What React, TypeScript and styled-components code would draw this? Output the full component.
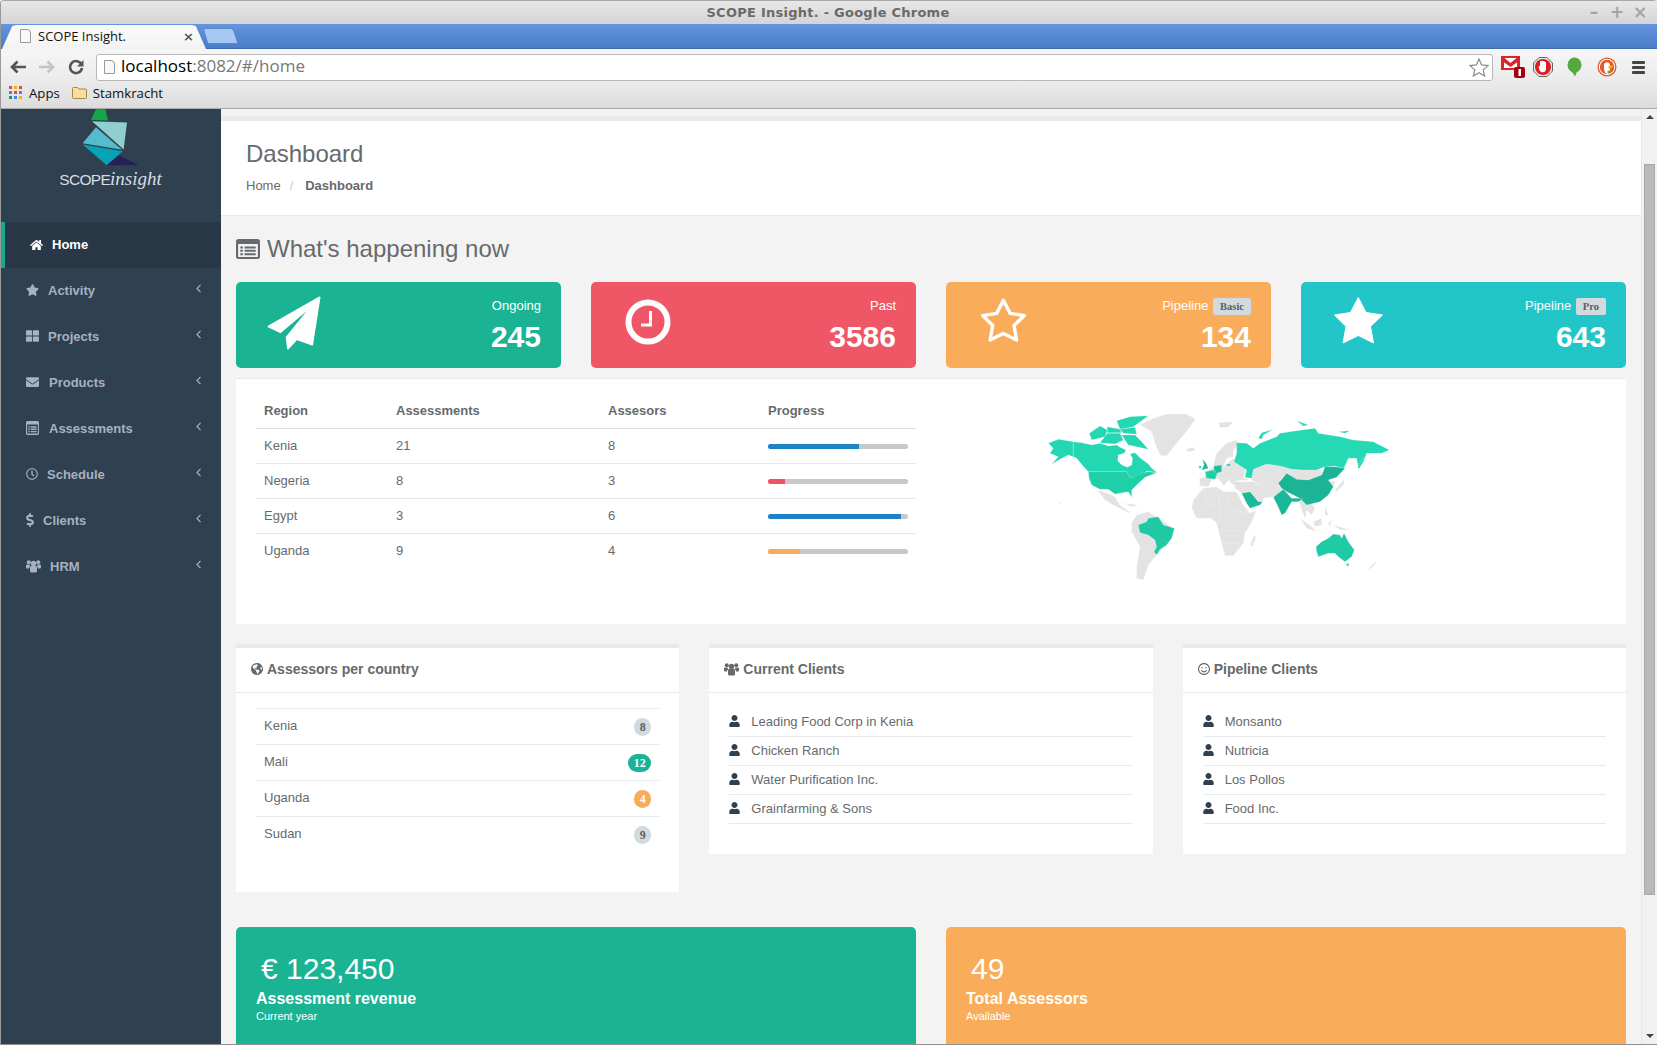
import React from "react";
import styled, { createGlobalStyle } from "styled-components";
import {
  FaDollarSign,
  FaEnvelope,
  FaGlobeAmericas,
  FaHome,
  FaRegClock,
  FaRegSmile,
  FaStar,
  FaThLarge,
  FaUser,
} from "react-icons/fa";

const GlobalStyle = createGlobalStyle`
  html, body { margin: 0; padding: 0; height: 100%; overflow: hidden; }
  body { font-family: "Liberation Sans", Arial, sans-serif; font-size: 13px; color: #676a6c; background: #f3f3f4; }
  * { box-sizing: border-box; }
`;

const UI_FONT = `"Open Sans", "Noto Sans", sans-serif`;

const regions = [
  { name: "Kenia", assessments: 21, assessors: 8, progress: 65, color: "#1c84c6" },
  { name: "Negeria", assessments: 8, assessors: 3, progress: 12, color: "#ed5565" },
  { name: "Egypt", assessments: 3, assessors: 6, progress: 95, color: "#1c84c6" },
  { name: "Uganda", assessments: 9, assessors: 4, progress: 23, color: "#f8ac59" },
];

const countries = [
  { name: "Kenia", count: 8, bg: "#d1dade", fg: "#5e5e5e" },
  { name: "Mali", count: 12, bg: "#1ab394", fg: "#fff" },
  { name: "Uganda", count: 4, bg: "#f8ac59", fg: "#fff" },
  { name: "Sudan", count: 9, bg: "#d1dade", fg: "#5e5e5e" },
];

function ListAltIcon({ width, height }: { width: number; height: number }) {
  return (
    <svg width={width} height={height} viewBox="0 0 28 24" fill="currentColor" preserveAspectRatio="none">
      <path fillRule="evenodd" d="M3 0h22a3 3 0 0 1 3 3v18a3 3 0 0 1-3 3H3a3 3 0 0 1-3-3V3a3 3 0 0 1 3-3zM2.5 6v15a.5.5 0 0 0 .5.5h22a.5.5 0 0 0 .5-.5V6z" />
      <path d="M5 9h3v2.4H5zM10 9h13v2.4H10zM5 13h3v2.4H5zM10 13h13v2.4H10zM5 17h3v2.4H5zM10 17h13v2.4H10z" />
    </svg>
  );
}

function UsersIcon() {
  return (
    <svg viewBox="0 0 30 26" fill="currentColor">
      <circle cx="15" cy="8" r="5.5" />
      <circle cx="5.5" cy="5.5" r="4" />
      <circle cx="24.5" cy="5.5" r="4" />
      <path d="M8 15.5a3 3 0 0 1 3-2.5h8a3 3 0 0 1 3 2.5V23a3 3 0 0 1-3 3h-8a3 3 0 0 1-3-3z" />
      <path d="M0 11.5a2 2 0 0 1 2-1.500h5c.5 1.5 1 2.5 2 3.500-2 .8-3 2.500-3 4.500H2a2 2 0 0 1-2-2z" />
      <path d="M30 11.5a2 2 0 0 0-2-1.500h-5c-.5 1.5-1 2.5-2 3.500 2 .8 3 2.500 3 4.500h4a2 2 0 0 0 2-2z" />
    </svg>
  );
}

const navItems = [
  { label: "Activity", icon: <FaStar />, width: 13, gap: 9 },
  { label: "Projects", icon: <FaThLarge />, width: 13, gap: 9 },
  { label: "Products", icon: <FaEnvelope />, width: 13, gap: 10 },
  { label: "Assessments", icon: <ListAltIcon width={13} height={10} />, width: 13, gap: 10 },
  { label: "Schedule", icon: <FaRegClock />, width: 12, gap: 9 },
  { label: "Clients", icon: <FaDollarSign />, width: 8, gap: 9 },
  { label: "HRM", icon: <UsersIcon />, width: 15, gap: 9 },
];

function Logo() {
  return (
    <svg width="60" height="57" viewBox="245 326 180 170">
      <polygon points="275,358 290,326 318,326 326,360" fill="#12a84a" />
      <polygon points="278,362 383,366 373,447" fill="#8fd0cf" />
      <polygon points="250,428 290,380 368,448" fill="#55bccd" />
      <polygon points="250,432 370,452 322,494" fill="#05a3b3" />
      <polygon points="322,494 360,465 418,494" fill="#262054" />
    </svg>
  );
}

function PlaneIcon() {
  return (
    <svg width="54" height="54" viewBox="110 78 160 160" fill="#fff" stroke="#fff" strokeWidth="5" strokeLinejoin="round">
      <polygon points="266,82 244,222 198,206 172,234 168,200 244,106 150,185 114,168" />
    </svg>
  );
}

function ClockIcon() {
  return (
    <svg width="46" height="46" viewBox="0 0 46 46" fill="none" stroke="#fff">
      <circle cx="23" cy="23" r="19.5" strokeWidth="6" />
      <path d="M25.5 12v14H16" strokeWidth="3" />
    </svg>
  );
}

function StarIcon({ solid }: { solid?: boolean }) {
  const points = solid
    ? "24.3,0.5 32,15.5 48.5,18 36.5,29.5 39.5,46 24.3,38.5 9,46 12,29.5 0.5,18 16.5,15.5"
    : "24.4,3.4 31.1,16.4 45.4,18.6 35,28.5 37.6,43 24.4,36.4 11.1,43 13.7,28.5 3.8,18.6 17.7,16.4";
  return (
    <svg width="49" height="47" viewBox="0 0 49 47" fill={solid ? "#fff" : "none"} stroke="#fff" strokeWidth={solid ? 1 : 3.4} strokeLinejoin="round">
      <polygon points={points} />
    </svg>
  );
}

function WorldMap() {
  const gray = "#e3e3e3";
  const land = (points: string, fill: string) => <polygon points={points} fill={fill} />;
  const border = (points: string) => <polyline points={points} fill="none" stroke="#fff" strokeOpacity="0.75" />;
  return (
    <svg width="400" height="210" viewBox="0 0 1200 630" stroke="#fff" strokeWidth="1" strokeOpacity="0.55">
      {/* grey countries */}
      {land("360,105 400,85 440,72 500,72 527,88 495,130 465,165 440,198 420,195 405,160 395,125", gray)}
      {land("498,178 520,172 525,182 505,185", gray)}
      {land("595,98 640,95 625,112 600,112", gray)}
      {land("580,225 590,190 620,160 650,150 655,165 640,180 640,200 620,205 610,230 590,235", gray)}
      {land("610,230 640,205 650,215 678,240 670,262 690,270 650,272 640,285 625,270 612,288 595,265 575,270 565,290 540,288 538,265 555,260 560,245 582,228", gray)}
      {land("640,275 700,275 720,285 770,285 785,295 790,305 760,320 730,325 728,335 715,335 690,305 665,310 645,295", gray)}
      {land("690,240 740,222 780,228 815,238 800,250 780,270 785,295 770,288 720,285 695,270", gray)}
      {land("815,238 850,238 905,238 905,255 865,270 830,268 800,250", gray)}
      {land("515,355 520,330 550,295 590,290 610,305 650,305 670,345 690,370 710,360 695,395 675,430 670,460 640,497 615,497 600,440 590,400 575,385 530,385", gray)}
      {border("550,295 560,340 530,385")}
      {border("590,290 600,350 595,400")}
      {border("610,305 640,360 690,370")}
      {border("600,350 560,340")}
      {border("600,420 680,425")}
      {border("612,460 670,460")}
      {border("570,270 640,262")}
      {border("600,235 625,270")}
      {border("720,285 740,320")}
      {border("720,240 760,285")}
      {land("690,465 705,432 707,445 697,470", gray)}
      {land("835,325 870,335 885,355 875,375 860,360 855,385 845,360", gray)}
      {land("840,385 875,410 890,425 860,415", gray)}
      {land("880,395 905,385 905,405 885,410", gray)}
      {land("915,350 925,375 915,375", gray)}
      {land("925,400 935,390 930,410", gray)}
      {land("940,405 990,420 960,420", gray)}
      {land("945,300 975,265 970,285 950,305", gray)}
      {land("930,275 945,272 940,292", gray)}
      {land("232,300 270,312 285,322 300,345 335,370 320,365 280,345 255,330", gray)}
      {land("310,340 355,345 335,350", gray)}
      {land("335,400 350,375 385,365 415,385 465,418 440,465 410,495 385,525 370,570 350,565 350,530 360,470 335,425", gray)}
      {land("1040,540 1072,510 1060,530", gray)}
      {/* canada and alaska */}
      {land("85,160 115,148 160,155 160,200 145,195 125,205 95,222 115,200 90,190 100,175", "#22d7b2")}
      {land("160,155 185,158 215,165 240,160 265,168 290,165 300,172 318,180 312,190 295,195 293,212 305,225 322,232 335,225 338,205 330,192 345,188 362,205 385,222 395,235 412,248 395,245 380,243 365,258 340,262 330,268 320,245 205,245 195,235 170,205 160,200", "#22d7b2")}
      {land("290,92 330,80 385,77 365,92 340,110 300,118", "#22d7b2")}
      {land("208,130 240,108 262,120 255,140 215,150", "#22d7b2")}
      {land("262,110 300,118 305,128 262,128", "#22d7b2")}
      {land("262,130 300,130 310,150 285,162 240,158", "#22d7b2")}
      {land("300,118 345,112 350,133 310,130", "#22d7b2")}
      {land("305,135 345,135 365,155 385,178 350,170 325,165", "#22d7b2")}
      {land("118,339 120,339 120,341 118,341", "#22d7b2")}
      {/* usa */}
      {land("205,245 320,245 330,265 360,250 385,245 410,248 375,262 350,285 335,300 335,322 325,305 285,312 265,298 240,298 215,285 207,265", "#1fcfa8")}
      {/* russia */}
      {land("650,158 680,160 700,175 720,160 770,140 780,130 830,122 885,115 895,130 960,140 1000,150 1060,155 1108,180 1085,190 1040,190 1030,215 1015,235 1010,205 985,205 975,228 970,235 945,228 910,232 890,240 850,240 815,238 780,228 740,222 700,238 695,265 675,262 680,240 642,215 650,190", "#24d9b4")}
      {land("715,145 725,128 760,118 730,135 725,148", "#24d9b4")}
      {land("830,92 865,105 850,108", "#24d9b4")}
      {land("955,125 990,122 975,130", "#24d9b4")}
      {land("1012,235 1030,200 1030,215 1018,235", "#24d9b4")}
      {/* western europe */}
      {land("548,208 558,220 565,235 545,240 552,225", "#1bb697")}
      {land("535,228 545,228 540,238", "#22d7b2")}
      {land("555,245 580,240 592,250 585,268 560,265", "#1fcfa8")}
      {land("582,228 605,225 605,245 590,250 582,240", "#1cc09f")}
      {land("620,222 632,222 630,228 620,228", "#22d7b2")}
      {/* asia */}
      {land("775,280 800,250 830,268 865,270 905,255 915,230 945,230 975,235 950,262 925,270 940,290 925,315 900,335 860,345 840,325 800,305 785,295", "#1cb496")}
      {land("760,322 790,298 815,325 850,325 835,335 815,335 795,370 785,375 772,345", "#1ab898")}
      {land("665,310 690,305 715,335 728,335 720,345 690,355 680,340", "#1cb99a")}
      {/* brazil and australia */}
      {land("355,405 380,395 385,385 415,380 430,405 463,415 455,445 440,465 420,478 410,495 402,485 410,470 405,450 385,435 360,428", "#1fc9a3")}
      {land("888,470 905,455 925,445 940,432 960,435 965,445 972,430 985,455 1003,480 995,500 975,515 955,500 945,490 925,490 895,500 890,485", "#1fcaa5")}
      {land("978,522 988,520 984,530", "#1fcaa5")}
    </svg>
  );
}

export default function App() {
  return (
    <>
      <GlobalStyle />
      <Window>
        <TitleBar>
          <WindowTitle>SCOPE Insight. - Google Chrome</WindowTitle>
          <WindowControls>
            <WindowControl>–</WindowControl>
            <WindowControl>+</WindowControl>
            <WindowControl>×</WindowControl>
          </WindowControls>
        </TitleBar>
        <TabStrip>
          <Tab>
            <PageGlyph />
            <TabTitle>SCOPE Insight.</TabTitle>
            <TabClose>×</TabClose>
          </Tab>
          <NewTab />
        </TabStrip>
        <Toolbar>
          <NavButton $color="#555">
            <svg width="16" height="14" viewBox="0 0 16 14" fill="none" stroke="currentColor" strokeWidth="2.6"><path d="M7.5 1.5L2 7l5.5 5.5M2 7h14" /></svg>
          </NavButton>
          <NavButton $color="#c4c4c4">
            <svg width="16" height="14" viewBox="0 0 16 14" fill="none" stroke="currentColor" strokeWidth="2.6"><path d="M8.5 1.5L14 7l-5.5 5.5M14 7H0" /></svg>
          </NavButton>
          <NavButton $color="#555">
            <svg width="16" height="16" viewBox="0 0 16 16" fill="none" stroke="currentColor" strokeWidth="2.6"><path d="M13.5 5.5A6 6 0 1 0 14 9" /><path d="M15.5 1v6.5H9z" fill="currentColor" stroke="none" /></svg>
          </NavButton>
          <Omnibox>
            <PageGlyph />
            <UrlText>
              localhost<UrlRest>:8082/#/home</UrlRest>
            </UrlText>
            <svg width="20" height="19" viewBox="0 0 20 19" fill="#fff" stroke="#8a8a8a" strokeWidth="1.2">
              <polygon points="10,1 12.6,6.9 19,7.6 14.2,11.9 15.6,18 10,14.8 4.4,18 5.8,11.9 1,7.6 7.4,6.9" />
            </svg>
          </Omnibox>
          <Extensions>
            <Extension $width={24} $gap={0}>
              <svg width="24" height="24" viewBox="0 0 24 24">
                <rect x="0" y="1" width="19" height="14" fill="#d9262c" />
                <path d="M3 3h13v10H3z" fill="#fff" />
                <path d="M1 1l8.5 7L18 1v5l-8.5 6L1 6z" fill="#d9262c" />
                <rect x="13" y="12" width="11" height="11" rx="2" fill="#a30014" />
                <rect x="17.5" y="14" width="2.5" height="7" fill="#fff" />
              </svg>
            </Extension>
            <Extension $width={20} $gap={8}>
              <svg width="20" height="20" viewBox="0 0 20 20">
                <polygon points="6,0.5 14,0.5 19.5,6 19.5,14 14,19.5 6,19.5 0.5,14 0.5,6" fill="#e8e8e8" stroke="#666" />
                <circle cx="10" cy="10" r="8" fill="#e01b22" />
                <path d="M5.5 9.5l1.500-.5V5a1 1 0 0 1 1.500-.7 1 1 0 0 1 1.800-.1 1 1 0 0 1 1.500.6 1 1 0 0 1 1.200.7V12a3.500 3.500 0 0 1-3.500 3.300c-2 0-3-1.300-4-5.800z" fill="#fff" />
              </svg>
            </Extension>
            <Extension $width={15} $gap={14}>
              <svg width="15" height="20" viewBox="0 0 15 20">
                <ellipse cx="7.5" cy="8" rx="7" ry="7.5" fill="#54a83e" />
                <path d="M4.500 14l3.500 5.500 2-5z" fill="#54a83e" />
              </svg>
            </Extension>
            <Extension $width={20} $gap={15}>
              <svg width="20" height="20" viewBox="0 0 20 20">
                <circle cx="10" cy="10" r="9.5" fill="#e4562b" />
                <circle cx="10" cy="10" r="8.2" fill="#fff" />
                <circle cx="10" cy="10" r="7.2" fill="#e4562b" />
                <path d="M7 7a3.500 3.500 0 0 1 6 0v7c0 2-1 3-3 3-2.500-1-3.500-5-3-10z" fill="#fff" />
                <path d="M11.5 9l4.800-.6-1 2.300-3.800 1z" fill="#f5b21d" />
                <path d="M10.5 14l3-1v3l-3 .5z" fill="#5bb23c" />
              </svg>
            </Extension>
            <MenuButton>
              <span />
              <span />
              <span />
            </MenuButton>
          </Extensions>
        </Toolbar>
        <BookmarksBar>
          <Bookmark>
            <AppsGrid>
              {["#e04a3f", "#f4b400", "#e04a3f", "#4285f4", "#e04a3f", "#4285f4", "#0f9d58", "#4285f4", "#f4b400"].map((c, i) => (
                <i key={i} style={{ background: c }} />
              ))}
            </AppsGrid>
            Apps
          </Bookmark>
          <Bookmark>
            <svg width="15" height="13" viewBox="0 0 15 13">
              <path d="M.5 2.500a1 1 0 0 1 1-1h4l1.500 1.500h6.500a1 1 0 0 1 1 1v7.500a1 1 0 0 1-1 1h-12a1 1 0 0 1-1-1z" fill="#fbdc9c" stroke="#a5894f" />
            </svg>
            Stamkracht
          </Bookmark>
        </BookmarksBar>
        <Body>
          <Sidebar>
            <LogoBlock>
              <Logo />
              <LogoText>
                SCOPE<em>insight</em>
              </LogoText>
            </LogoBlock>
            <NavActive>
              <NavIcon $width={13}><FaHome /></NavIcon>
              Home
            </NavActive>
            {navItems.map((item) => (
              <NavRow key={item.label}>
                <NavLabel $gap={item.gap}>
                  <NavIcon $width={item.width}>{item.icon}</NavIcon>
                  {item.label}
                </NavLabel>
                <svg width="5" height="9" viewBox="0 0 5 9" fill="none" stroke="currentColor" strokeWidth="1.2"><path d="M4.5 .8L1 4.5 4.5 8.2" /></svg>
              </NavRow>
            ))}
          </Sidebar>
          <Content>
            <PageHeading>
              <PageTitle>Dashboard</PageTitle>
              <Breadcrumb>
                <span>Home</span>
                <Slash>/</Slash>
                <strong>Dashboard</strong>
              </Breadcrumb>
            </PageHeading>
            <Wrapper>
              <SectionTitle>
                <ListAltIcon width={24} height={20} />
                What's happening now
              </SectionTitle>
              <StatRow>
                <StatCard $bg="#1ab394">
                  <StatIcon $x={31} $up={5}><PlaneIcon /></StatIcon>
                  <StatText>
                    <StatLabel>Ongoing</StatLabel>
                    <StatValue>245</StatValue>
                  </StatText>
                </StatCard>
                <StatCard $bg="#ef5766">
                  <StatIcon $x={34} $up={6}><ClockIcon /></StatIcon>
                  <StatText>
                    <StatLabel>Past</StatLabel>
                    <StatValue>3586</StatValue>
                  </StatText>
                </StatCard>
                <StatCard $bg="#f9ad5a">
                  <StatIcon $x={33} $up={10}><StarIcon /></StatIcon>
                  <StatText>
                    <StatLabel>
                      Pipeline <PlanTag>Basic</PlanTag>
                    </StatLabel>
                    <StatValue>134</StatValue>
                  </StatText>
                </StatCard>
                <StatCard $bg="#23c6c8">
                  <StatIcon $x={33} $up={10}><StarIcon solid /></StatIcon>
                  <StatText>
                    <StatLabel>
                      Pipeline <PlanTag>Pro</PlanTag>
                    </StatLabel>
                    <StatValue>643</StatValue>
                  </StatText>
                </StatCard>
              </StatRow>
              <RegionPanel>
                <RegionTable>
                  <thead>
                    <tr>
                      <th>Region</th>
                      <th>Assessments</th>
                      <th>Assesors</th>
                      <th>Progress</th>
                    </tr>
                  </thead>
                  <tbody>
                    {regions.map((r) => (
                      <tr key={r.name}>
                        <td>{r.name}</td>
                        <td>{r.assessments}</td>
                        <td>{r.assessors}</td>
                        <td>
                          <ProgressTrack>
                            <ProgressFill $color={r.color} style={{ width: `${r.progress}%` }} />
                          </ProgressTrack>
                        </td>
                      </tr>
                    ))}
                  </tbody>
                </RegionTable>
                <MapSlot>
                  <WorldMap />
                </MapSlot>
              </RegionPanel>
              <BoxRow>
                <Box>
                  <BoxTitle $gap={4} $iconWidth={12}><FaGlobeAmericas />Assessors per country</BoxTitle>
                  <BoxBody $pb={40}>
                    {countries.map((c) => (
                      <CountryRow key={c.name}>
                        {c.name}
                        <CountBadge $bg={c.bg} $fg={c.fg}>{c.count}</CountBadge>
                      </CountryRow>
                    ))}
                  </BoxBody>
                </Box>
                <Box>
                  <BoxTitle $gap={4} $iconWidth={15}><UsersIcon />Current Clients</BoxTitle>
                  <BoxBody $pb={30}>
                    {["Leading Food Corp in Kenia", "Chicken Ranch", "Water Purification Inc.", "Grainfarming & Sons"].map((n) => (
                      <ClientRow key={n}><FaUser />{n}</ClientRow>
                    ))}
                  </BoxBody>
                </Box>
                <Box>
                  <BoxTitle $gap={4} $iconWidth={12}><FaRegSmile />Pipeline Clients</BoxTitle>
                  <BoxBody $pb={30}>
                    {["Monsanto", "Nutricia", "Los Pollos", "Food Inc."].map((n) => (
                      <ClientRow key={n}><FaUser />{n}</ClientRow>
                    ))}
                  </BoxBody>
                </Box>
              </BoxRow>
              <SummaryRow>
                <SummaryCard $bg="#1ab394">
                  <SummaryValue>€ 123,450</SummaryValue>
                  <SummaryTitle>Assessment revenue</SummaryTitle>
                  <SummaryNote>Current year</SummaryNote>
                </SummaryCard>
                <SummaryCard $bg="#f9ad5a">
                  <SummaryValue>49</SummaryValue>
                  <SummaryTitle>Total Assessors</SummaryTitle>
                  <SummaryNote>Available</SummaryNote>
                </SummaryCard>
              </SummaryRow>
            </Wrapper>
          </Content>
          <ScrollBar>
            <ScrollArrow $up />
            <ScrollTrack><ScrollThumb /></ScrollTrack>
            <ScrollArrow />
          </ScrollBar>
        </Body>
      </Window>
    </>
  );
}

const Window = styled.div`
  display: flex;
  flex-direction: column;
  width: 1657px;
  height: 1045px;
  overflow: hidden;
  border-left: 1px solid #9a9a9a;
  border-top: 1px solid #a8a8a8;
  border-bottom: 1px solid #8e8e8e;
  border-radius: 4px 4px 0 0;
`;

const TitleBar = styled.div`
  position: relative;
  flex: none;
  height: 23px;
  background: linear-gradient(#e8e8e8, #d4d4d4);
  display: flex;
  align-items: center;
  justify-content: center;
  padding-right: 2px;
`;

const WindowTitle = styled.div`
  font: bold 13px "DejaVu Sans", sans-serif;
  color: #6a6a6a;
  letter-spacing: 0.25px;
`;

const WindowControls = styled.div`
  position: absolute;
  right: 8px;
  top: 1px;
  display: flex;
  gap: 5px;
`;

const WindowControl = styled.span`
  width: 18px;
  text-align: center;
  font: bold 17px "DejaVu Sans", sans-serif;
  color: #a4a4a4;
`;

const TabStrip = styled.div`
  flex: none;
  height: 25px;
  background: linear-gradient(#6394dd, #4a7cc8);
  border-bottom: 1px solid #3f6cb0;
  display: flex;
  align-items: flex-end;
  padding-left: 1px;
`;

const Tab = styled.div`
  display: flex;
  align-items: center;
  gap: 7px;
  width: 204px;
  height: 24px;
  margin-bottom: -1px;
  padding: 0 12px 2px 18px;
  background: linear-gradient(#fbfbfb, #f3f3f3);
  clip-path: polygon(0 100%, 5% 4%, 7% 0, 93% 0, 95% 4%, 100% 100%);
`;

const PageGlyph = styled.span`
  flex: none;
  width: 11px;
  height: 14px;
  background: #f8f8f8;
  border: 1px solid #9a9a9a;
  border-top-right-radius: 4px;
`;

const TabTitle = styled.span`
  flex: 1;
  font: 13px ${UI_FONT};
  color: #111;
`;

const TabClose = styled.span`
  font: bold 13px "DejaVu Sans", sans-serif;
  color: #555;
`;

const NewTab = styled.div`
  width: 31px;
  height: 16px;
  margin: 0 0 4px -1px;
  background: #a6c8f5;
  border: 1px solid #5d86c4;
  border-radius: 3px 3px 2px 2px;
  transform: skewX(18deg);
`;

const Toolbar = styled.div`
  flex: none;
  height: 32px;
  display: flex;
  align-items: center;
  background: linear-gradient(#f6f6f6, #ebebeb);
  padding: 4px 0 0 2px;
`;

const NavButton = styled.div<{ $color: string }>`
  display: flex;
  align-items: center;
  justify-content: center;
  width: 29px;
  color: ${(p) => p.$color};
`;

const Omnibox = styled.div`
  flex: 1;
  height: 27px;
  margin-left: 6px;
  display: flex;
  align-items: center;
  gap: 6px;
  padding: 0 3px 0 7px;
  background: #fff;
  border: 1px solid #b8b8b8;
  border-radius: 3px;
`;

const UrlText = styled.div`
  flex: 1;
  margin-top: -3px;
  font: 17px ${UI_FONT};
  color: #000;
`;

const UrlRest = styled.span`
  color: #777;
`;

const Extensions = styled.div`
  flex: none;
  width: 164px;
  display: flex;
  align-items: center;
  padding-left: 8px;
`;

const Extension = styled.div<{ $width: number; $gap: number }>`
  display: flex;
  flex: none;
  width: ${(p) => p.$width}px;
  margin-left: ${(p) => p.$gap}px;
`;

const MenuButton = styled.div`
  display: flex;
  flex-direction: column;
  gap: 2px;
  margin-left: 15px;
  width: 13px;
  span {
    height: 3px;
    border-radius: 1px;
    background: #444;
  }
`;

const BookmarksBar = styled.div`
  flex: none;
  height: 28px;
  display: flex;
  align-items: center;
  gap: 12px;
  padding: 0 0 4px 8px;
  background: linear-gradient(#ebebeb, #dcdcdc);
  border-bottom: 1px solid #a9a9a9;
`;

const Bookmark = styled.div`
  display: flex;
  align-items: center;
  gap: 6px;
  font: 13.2px ${UI_FONT};
  color: #111;
`;

const AppsGrid = styled.div`
  display: grid;
  grid-template-columns: repeat(3, 3px);
  grid-auto-rows: 3px;
  gap: 2px;
  margin-right: 1px;
  i { display: block; }
`;

const Body = styled.div`
  flex: 1;
  min-height: 0;
  display: flex;
`;

const Sidebar = styled.aside`
  flex: none;
  width: 220px;
  background: #2f4050;
`;

const LogoBlock = styled.div`
  height: 113px;
  display: flex;
  flex-direction: column;
  align-items: center;
`;

const LogoText = styled.div`
  margin: 2px 0 0 -1px;
  font: 15.5px "Liberation Sans", sans-serif;
  letter-spacing: -0.7px;
  color: #d8dde0;
  em {
    font: italic 19px "Liberation Serif", serif;
    letter-spacing: 0;
  }
`;

const NavIcon = styled.span<{ $width: number }>`
  display: inline-flex;
  align-items: center;
  justify-content: flex-start;
  width: ${(p) => p.$width}px;
  svg {
    display: block;
    width: ${(p) => p.$width}px;
    height: 14px;
  }
`;

const NavActive = styled.div`
  height: 46px;
  display: flex;
  align-items: center;
  gap: 9px;
  padding: 0 0 1px 25px;
  background: #293846;
  border-left: 4px solid #19aa8d;
  color: #fff;
  font-weight: bold;
  font-size: 13px;
`;

const NavRow = styled.div`
  height: 46px;
  display: flex;
  align-items: center;
  justify-content: space-between;
  padding: 0 20px 2px 25px;
  color: #a7b1c2;
  font-weight: bold;
  font-size: 13px;
  > svg {
    margin-top: -3px;
  }
`;

const NavLabel = styled.span<{ $gap: number }>`
  display: flex;
  align-items: center;
  gap: ${(p) => p.$gap}px;
`;

const Content = styled.main`
  flex: 1;
  min-width: 0;
  overflow: hidden;
  background: #f3f3f4;
  padding-top: 7px;
`;

const PageHeading = styled.header`
  height: 100px;
  padding: 18px 20px 0 25px;
  background: #fff;
  border-top: 5px solid #e7eaec;
  border-bottom: 1px solid #e7eaec;
`;

const PageTitle = styled.h2`
  margin: 0;
  font-size: 24px;
  font-weight: 400;
  line-height: 30px;
`;

const Breadcrumb = styled.div`
  margin-top: 8px;
  display: flex;
  font-size: 13px;
  line-height: 18px;
  strong { color: #676a6c; }
`;

const Slash = styled.span`
  width: 24.5px;
  padding-left: 9px;
  color: #ccc;
`;

const Wrapper = styled.div`
  padding: 0 15px;
`;

const SectionTitle = styled.h3`
  margin: 0;
  height: 66px;
  display: flex;
  align-items: center;
  gap: 7px;
  font-size: 24px;
  font-weight: 400;
  padding-bottom: 1px;
`;

const StatRow = styled.div`
  display: grid;
  grid-template-columns: repeat(4, 1fr);
  gap: 30px;
`;

const StatCard = styled.div<{ $bg: string }>`
  height: 86px;
  display: flex;
  align-items: center;
  justify-content: space-between;
  padding-right: 20px;
  border-radius: 5px;
  background: ${(p) => p.$bg};
  color: #fff;
`;

const StatIcon = styled.div<{ $x: number; $up: number }>`
  display: flex;
  margin-left: ${(p) => p.$x}px;
  margin-bottom: ${(p) => p.$up}px;
`;

const StatText = styled.div`
  text-align: right;
`;

const StatLabel = styled.div`
  height: 21px;
  font-size: 13px;
  line-height: 16px;
`;

const PlanTag = styled.span`
  display: inline-block;
  margin-left: 1px;
  padding: 0 7px;
  height: 17px;
  border-radius: 2px;
  background: #d1dade;
  color: #5e5e5e;
  font: bold 10.5px/17px "Liberation Serif", serif;
  vertical-align: middle;
`;

const StatValue = styled.div`
  font-size: 30px;
  font-weight: bold;
  line-height: 36px;
  margin-bottom: -3px;
`;

const RegionPanel = styled.section`
  margin-top: 10px;
  height: 246px;
  display: flex;
  background: #fff;
  border-top: 1px solid #e7eaec;
  padding: 13px 0 0 20px;
`;

const RegionTable = styled.table`
  flex: none;
  width: 660px;
  height: 0;
  border-collapse: collapse;
  table-layout: fixed;
  th, td {
    padding: 0 8px;
    text-align: left;
    font-size: 13px;
  }
  th {
    height: 36px;
    padding-top: 2px;
    font-weight: bold;
    border-bottom: 1px solid #e0e0e0;
  }
  td { height: 35px; border-bottom: 1px solid #e7e7e7; }
  tr:last-child td { border-bottom: 0; }
  th:nth-child(1) { width: 132px; }
  th:nth-child(2) { width: 212px; }
  th:nth-child(3) { width: 160px; }
`;

const ProgressTrack = styled.div`
  height: 5px;
  width: 140px;
  margin-top: 1px;
  border-radius: 3px;
  overflow: hidden;
  background: #c8c8c8;
`;

const ProgressFill = styled.div<{ $color: string }>`
  height: 100%;
  background: ${(p) => p.$color};
`;

const MapSlot = styled.div`
  margin: -2px 0 0 104px;
`;

const BoxRow = styled.div`
  margin-top: 20px;
  display: grid;
  grid-template-columns: repeat(3, 1fr);
  gap: 30px;
  align-items: start;
`;

const Box = styled.section`
  background: #fff;
  border-top: 4px solid #e7eaec;
`;

const BoxTitle = styled.h5<{ $gap: number; $iconWidth: number }>`
  margin: 0;
  height: 45px;
  display: flex;
  align-items: center;
  gap: ${(p) => p.$gap}px;
  padding: 0 15px 2px;
  font-size: 14px;
  font-weight: bold;
  border-bottom: 1px solid #e7eaec;
  svg {
    width: ${(p) => p.$iconWidth}px;
    height: 14px;
  }
`;

const BoxBody = styled.div<{ $pb: number }>`
  padding: 15px 20px ${(p) => p.$pb}px;
`;

const CountryRow = styled.div`
  height: 36px;
  display: flex;
  align-items: center;
  justify-content: space-between;
  padding: 0 8px 2px;
  border-top: 1px solid #e7eaec;
  font-size: 13px;
`;

const CountBadge = styled.span<{ $bg: string; $fg: string }>`
  min-width: 17px;
  height: 18px;
  padding: 0 5.5px;
  margin-top: 2px;
  border-radius: 9px;
  text-align: center;
  background: ${(p) => p.$bg};
  color: ${(p) => p.$fg};
  font: bold 12px/18px "Liberation Serif", serif;
`;

const ClientRow = styled.div`
  height: 29px;
  display: flex;
  align-items: center;
  gap: 11px;
  padding: 0 0 2px;
  border-bottom: 1px solid #e7eaec;
  font-size: 13px;
  svg {
    width: 11px;
    height: 12px;
    color: #2f4050;
  }
`;

const SummaryRow = styled.div`
  margin-top: 35px;
  display: grid;
  grid-template-columns: repeat(2, 1fr);
  gap: 30px;
`;

const SummaryCard = styled.div<{ $bg: string }>`
  height: 140px;
  padding: 24px 20px;
  border-radius: 5px;
  background: ${(p) => p.$bg};
  color: #fff;
`;

const SummaryValue = styled.div`
  padding-left: 5px;
  font-size: 30px;
  line-height: 36px;
`;

const SummaryTitle = styled.div`
  margin-top: 2px;
  font-size: 16px;
  font-weight: bold;
  line-height: 20px;
`;

const SummaryNote = styled.div`
  font-size: 11px;
  line-height: 14px;
`;

const ScrollBar = styled.div`
  flex: none;
  width: 16px;
  display: flex;
  flex-direction: column;
  align-items: center;
  background: #f1f1f1;
  border-left: 1px solid #e6e6e6;
`;

const ScrollArrow = styled.div<{ $up?: boolean }>`
  flex: none;
  width: 0;
  height: 0;
  margin: ${(p) => (p.$up ? "6px 0 0" : "0 0 6px")};
  border-left: 4px solid transparent;
  border-right: 4px solid transparent;
  ${(p) => (p.$up ? "border-bottom: 4px solid #444;" : "border-top: 4px solid #444;")}
`;

const ScrollTrack = styled.div`
  flex: 1;
  padding: 45px 0 139px;
`;

const ScrollThumb = styled.div`
  width: 11px;
  height: 100%;
  background: #b9b9b9;
  border: 1px solid #aaa;
`;
